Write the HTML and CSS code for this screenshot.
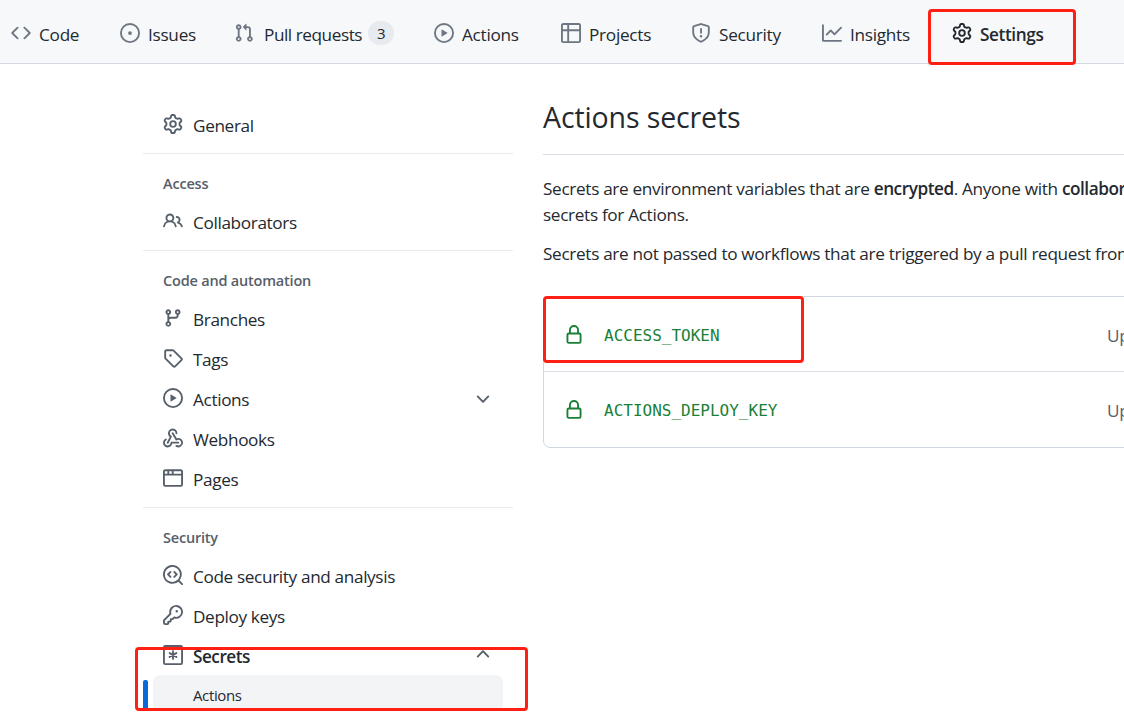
FILE: index.html
```html
<!DOCTYPE html>
<html lang="en">
<head>
<meta charset="utf-8">
<title>Actions secrets</title>
<link rel="stylesheet" href="styles.css">
</head>
<body>
<svg class="sprite" aria-hidden="true">
  <symbol id="code" viewBox="0 0 16 16"><path d="M4.72 3.22a.75.75 0 011.06 1.06L2.06 8l3.72 3.72a.75.75 0 11-1.06 1.06L.47 8.53a.75.75 0 010-1.06l4.25-4.25zm6.56 0a.75.75 0 10-1.06 1.06L13.94 8l-3.72 3.72a.75.75 0 101.06 1.06l4.25-4.25a.75.75 0 000-1.06l-4.25-4.25z"/></symbol>
  <symbol id="issue" viewBox="0 0 16 16"><path d="M8 9.5a1.5 1.5 0 100-3 1.5 1.5 0 000 3z"/><path fill-rule="evenodd" d="M8 0a8 8 0 100 16A8 8 0 008 0zM1.5 8a6.5 6.5 0 1113 0 6.5 6.5 0 01-13 0z"/></symbol>
  <symbol id="pull" viewBox="0 0 16 16"><path fill-rule="evenodd" d="M7.177 3.073L9.573.677A.25.25 0 0110 .854v4.792a.25.25 0 01-.427.177L7.177 3.427a.25.25 0 010-.354zM3.75 2.5a.75.75 0 100 1.5.75.75 0 000-1.5zm-2.25.75a2.25 2.25 0 113 2.122v5.256a2.251 2.251 0 11-1.5 0V5.372A2.25 2.25 0 011.5 3.25zM11 2.5h-1V4h1a1 1 0 011 1v5.628a2.251 2.251 0 101.5 0V5A2.5 2.5 0 0011 2.5zm1 10.25a.75.75 0 111.5 0 .75.75 0 01-1.5 0zM3.75 12a.75.75 0 100 1.5.75.75 0 000-1.5z"/></symbol>
  <symbol id="play" viewBox="0 0 16 16"><path fill-rule="evenodd" d="M1.5 8a6.5 6.5 0 1113 0 6.5 6.5 0 01-13 0zM8 0a8 8 0 100 16A8 8 0 008 0zM6.379 5.227A.25.25 0 006 5.442v5.117a.25.25 0 00.379.214l4.264-2.559a.25.25 0 000-.428L6.379 5.227z"/></symbol>
  <symbol id="table" viewBox="0 0 16 16"><path fill-rule="evenodd" d="M0 1.75C0 .784.784 0 1.75 0h12.5C15.216 0 16 .784 16 1.75v12.5A1.75 1.75 0 0114.25 16H1.75A1.75 1.75 0 010 14.25V1.75zM1.5 6.5v7.75c0 .138.112.25.25.25H5v-8H1.5zM5 5H1.5V1.75a.25.25 0 01.25-.25H5V5zm1.5 1.5v8h7.75a.25.25 0 00.25-.25V6.5h-8zm8-1.5h-8V1.5h7.75a.25.25 0 01.25.25V5z"/></symbol>
  <symbol id="shield" viewBox="0 0 16 16"><path fill-rule="evenodd" d="M7.467.133a1.75 1.75 0 011.066 0l5.25 1.68A1.75 1.75 0 0115 3.48V7c0 1.566-.32 3.182-1.303 4.682-.983 1.498-2.585 2.813-5.032 3.855a1.7 1.7 0 01-1.33 0c-2.447-1.042-4.049-2.357-5.032-3.855C1.32 10.182 1 8.566 1 7V3.48a1.75 1.75 0 011.217-1.667l5.25-1.68zm.61 1.429a.25.25 0 00-.153 0l-5.25 1.68a.25.25 0 00-.174.238V7c0 1.358.275 2.666 1.057 3.86.784 1.194 2.121 2.34 4.366 3.297a.2.2 0 00.154 0c2.245-.956 3.582-2.104 4.366-3.298C13.225 9.666 13.5 8.36 13.5 7V3.48a.25.25 0 00-.174-.237l-5.25-1.68zM9 10.5a1 1 0 11-2 0 1 1 0 012 0zm-.25-5.75a.75.75 0 10-1.5 0v3a.75.75 0 001.5 0v-3z"/></symbol>
  <symbol id="graph" viewBox="0 0 16 16"><path fill-rule="evenodd" d="M1.5 1.75a.75.75 0 00-1.5 0v12.5c0 .414.336.75.75.75h14.5a.75.75 0 000-1.5H1.5V1.75zm14.28 2.53a.75.75 0 00-1.06-1.06L10 7.94 7.53 5.47a.75.75 0 00-1.06 0L3.22 8.72a.75.75 0 001.06 1.06L7 7.06l2.47 2.47a.75.75 0 001.06 0l5.25-5.25z"/></symbol>
  <symbol id="gear" viewBox="0 0 16 16"><path fill-rule="evenodd" d="M8 0a8.2 8.2 0 0 1 .701.031C9.444.095 9.99.645 10.16 1.29l.288 1.107c.018.066.079.158.212.224.231.114.454.243.668.386.123.082.233.09.299.071l1.103-.303c.644-.176 1.392.021 1.82.63.27.385.506.792.704 1.218.315.675.111 1.422-.364 1.891l-.814.806c-.049.048-.098.147-.088.294.016.257.016.515 0 .772-.01.147.038.246.088.294l.814.806c.475.469.679 1.216.364 1.891a7.977 7.977 0 0 1-.704 1.217c-.428.61-1.176.807-1.82.63l-1.102-.302c-.067-.019-.177-.011-.3.071a5.909 5.909 0 0 1-.668.386c-.133.066-.194.158-.211.224l-.29 1.106c-.168.646-.715 1.196-1.458 1.26a8.006 8.006 0 0 1-1.402 0c-.743-.064-1.289-.614-1.458-1.26l-.289-1.106c-.018-.066-.079-.158-.212-.224a5.738 5.738 0 0 1-.668-.386c-.123-.082-.233-.09-.299-.071l-1.103.303c-.644.176-1.392-.021-1.82-.63a8.12 8.12 0 0 1-.704-1.218c-.315-.675-.111-1.422.363-1.891l.815-.806c.05-.048.098-.147.088-.294a6.214 6.214 0 0 1 0-.772c.01-.147-.038-.246-.088-.294l-.815-.806C.635 6.045.431 5.298.746 4.623a7.92 7.92 0 0 1 .704-1.217c.428-.61 1.176-.807 1.82-.63l1.102.302c.067.019.177.011.3-.071.214-.143.437-.272.668-.386.133-.066.194-.158.211-.224l.29-1.106C6.009.645 6.556.095 7.299.03 7.53.01 7.764 0 8 0Zm-.571 1.525c-.036.003-.108.036-.137.146l-.289 1.105c-.147.561-.549.967-.998 1.189-.173.086-.34.183-.5.29-.417.278-.97.423-1.529.27l-1.103-.303c-.109-.03-.175.016-.195.045-.22.312-.412.644-.573.99-.014.031-.021.11.059.19l.815.806c.411.406.562.957.53 1.456a4.709 4.709 0 0 0 0 .582c.032.499-.119 1.05-.53 1.456l-.815.806c-.081.08-.073.159-.059.19.162.346.353.677.573.989.02.03.085.076.195.046l1.102-.303c.56-.153 1.113-.008 1.53.27.161.107.328.204.501.29.447.222.85.629.997 1.189l.289 1.105c.029.109.101.143.137.146a6.6 6.6 0 0 0 1.142 0c.036-.003.108-.036.137-.146l.289-1.105c.147-.561.549-.967.998-1.189.173-.086.34-.183.5-.29.417-.278.97-.423 1.529-.27l1.103.303c.109.029.175-.016.195-.045.22-.313.411-.644.573-.99.014-.031.021-.11-.059-.19l-.815-.806c-.411-.406-.562-.957-.53-1.456a4.709 4.709 0 0 0 0-.582c-.032-.499.119-1.05.53-1.456l.815-.806c.081-.08.073-.159.059-.19a6.464 6.464 0 0 0-.573-.989c-.02-.03-.085-.076-.195-.046l-1.102.303c-.56.153-1.113.008-1.53-.27a4.44 4.44 0 0 0-.501-.29c-.447-.222-.85-.629-.997-1.189l-.289-1.105c-.029-.11-.101-.143-.137-.146a6.6 6.6 0 0 0-1.142 0ZM11 8a3 3 0 1 1-6 0 3 3 0 0 1 6 0ZM9.5 8a1.5 1.5 0 1 0-3.001.001A1.5 1.5 0 0 0 9.5 8Z"/></symbol>
  <symbol id="people" viewBox="0 0 16 16"><path fill-rule="evenodd" d="M5.5 3.5a2 2 0 100 4 2 2 0 000-4zM2 5.5a3.5 3.5 0 115.898 2.549 5.507 5.507 0 013.034 4.084.75.75 0 11-1.482.235 4.001 4.001 0 00-7.9 0 .75.75 0 01-1.482-.236A5.507 5.507 0 013.102 8.05 3.49 3.49 0 012 5.5zM11 4a.75.75 0 100 1.5 1.5 1.5 0 01.666 2.844.75.75 0 00-.416.672v.352a.75.75 0 00.574.73c1.2.289 2.162 1.2 2.522 2.372a.75.75 0 101.434-.44 5.01 5.01 0 00-2.56-3.012A3 3 0 0011 4z"/></symbol>
  <symbol id="branch" viewBox="0 0 16 16"><path fill-rule="evenodd" d="M11.75 2.5a.75.75 0 100 1.5.75.75 0 000-1.5zm-2.25.75a2.25 2.25 0 113 2.122V6A2.5 2.5 0 0110 8.5H6a1 1 0 00-1 1v1.128a2.251 2.251 0 11-1.5 0V5.372a2.25 2.25 0 111.5 0v1.836A2.492 2.492 0 016 7h4a1 1 0 001-1v-.628A2.25 2.25 0 019.5 3.25zM4.25 12a.75.75 0 100 1.5.75.75 0 000-1.5zM3.5 3.25a.75.75 0 111.5 0 .75.75 0 01-1.5 0z"/></symbol>
  <symbol id="tag" viewBox="0 0 16 16"><path fill-rule="evenodd" d="M1 7.775V2.75C1 1.784 1.784 1 2.75 1h5.025c.464 0 .91.184 1.238.513l6.25 6.25a1.75 1.75 0 0 1 0 2.474l-5.026 5.026a1.75 1.75 0 0 1-2.474 0l-6.25-6.25A1.752 1.752 0 0 1 1 7.775Zm1.5 0c0 .066.026.13.073.177l6.25 6.25a.25.25 0 0 0 .354 0l5.025-5.025a.25.25 0 0 0 0-.354l-6.25-6.25a.25.25 0 0 0-.177-.073H2.75a.25.25 0 0 0-.25.25ZM6 5a1 1 0 1 1 0 2 1 1 0 0 1 0-2Z"/></symbol>
  <symbol id="webhook" viewBox="0 0 16 16"><path d="M5.5 4.25a2.25 2.25 0 014.5 0 .75.75 0 001.5 0 3.75 3.75 0 10-6.14 2.889l-2.272 4.258a.75.75 0 001.324.706L7 7.25a.75.75 0 00-.309-1.015A2.25 2.25 0 015.5 4.25z"/><path d="M7.364 3.607a.75.75 0 011.03.257l2.608 4.349a3.75 3.75 0 11-.628 6.785.75.75 0 01.752-1.299 2.25 2.25 0 10-.033-3.88.75.75 0 01-1.03-.256L7.107 4.636a.75.75 0 01.257-1.03z"/><path d="M2.9 8.776A.75.75 0 012.625 9.8 2.25 2.25 0 106 11.75a.75.75 0 01.75-.751h5.5a.75.75 0 010 1.5H7.425a3.75 3.75 0 11-5.55-3.998.75.75 0 011.024.274z"/></symbol>
  <symbol id="browser" viewBox="0 0 16 16"><path fill-rule="evenodd" d="M0 2.75C0 1.784.784 1 1.75 1h12.5c.966 0 1.75.784 1.75 1.75v10.5A1.75 1.75 0 0114.25 15H1.75A1.75 1.75 0 010 13.25V2.75zm1.75-.25a.25.25 0 00-.25.25V4.5h2v-2H1.75zM5 2.5v2h2v-2H5zm3.5 0v2h6V2.75a.25.25 0 00-.25-.25H8.5zm6 3.5h-13v7.25c0 .138.112.25.25.25h12.5a.25.25 0 00.25-.25V6z"/></symbol>
  <symbol id="codescan" viewBox="0 0 16 16"><path d="M8.47 4.97a.75.75 0 000 1.06L9.94 7.5 8.47 8.97a.75.75 0 101.06 1.06l2-2a.75.75 0 000-1.06l-2-2a.75.75 0 00-1.06 0zM6.53 6.03a.75.75 0 00-1.06-1.06l-2 2a.75.75 0 000 1.06l2 2a.75.75 0 101.06-1.06L5.06 7.5l1.47-1.47z"/><path fill-rule="evenodd" d="M12.246 13.307a7.5 7.5 0 111.06-1.06l2.474 2.473a.75.75 0 11-1.06 1.06l-2.474-2.473zM1.5 7.5a6 6 0 1110.386 4.094.75.75 0 00-.292.293A6 6 0 011.5 7.5z"/></symbol>
  <symbol id="key" viewBox="0 0 16 16"><path fill-rule="evenodd" d="M10.5 0a5.499 5.499 0 1 1-1.288 10.848l-.932.932a.749.749 0 0 1-.53.22H7v.75a.749.749 0 0 1-.22.53l-.5.5a.749.749 0 0 1-.53.22H5v.75a.749.749 0 0 1-.22.53l-.5.5a.749.749 0 0 1-.53.22h-2A1.75 1.75 0 0 1 0 14.25v-2c0-.199.079-.389.22-.53l4.932-4.932A5.5 5.5 0 0 1 10.5 0Zm-4 5.5c-.001.431.069.86.205 1.269a.75.75 0 0 1-.181.768L1.5 12.56v1.69c0 .138.112.25.25.25h1.69l.06-.06v-1.19a.75.75 0 0 1 .75-.75h1.19l.06-.06v-1.19a.75.75 0 0 1 .75-.75h1.19l1.023-1.025a.75.75 0 0 1 .768-.18A4 4 0 1 0 6.5 5.5ZM11 6a1 1 0 1 1 0-2 1 1 0 0 1 0 2Z"/></symbol>
  <symbol id="asterisk" viewBox="0 0 16 16"><rect x=".75" y=".75" width="14.5" height="14.5" rx="1" fill="none" stroke="currentColor" stroke-width="1.5"/><path d="M8 4.9v6.2M5.3 6.45l5.4 3.1M5.3 9.55l5.4-3.1" fill="none" stroke="currentColor" stroke-width="1.5" stroke-linecap="round"/></symbol>
  <symbol id="chevron" viewBox="0 0 16 16"><path d="M12.78 6.22a.75.75 0 010 1.06l-4.25 4.25a.75.75 0 01-1.06 0L3.22 7.28a.75.75 0 011.06-1.06L8 9.94l3.72-3.72a.75.75 0 011.06 0z"/></symbol>
  <symbol id="lock" viewBox="0 0 16 16"><path fill-rule="evenodd" d="M4 4v2h-.25A1.75 1.75 0 002 7.75v5.5c0 .966.784 1.75 1.75 1.75h8.5A1.75 1.75 0 0014 13.25v-5.5A1.75 1.75 0 0012.25 6H12V4a4 4 0 10-8 0zm6.5 2V4a2.5 2.5 0 10-5 0v2h5zM12 7.5h.25a.25.25 0 01.25.25v5.5a.25.25 0 01-.25.25h-8.5a.25.25 0 01-.25-.25v-5.5a.25.25 0 01.25-.25H12z"/></symbol>
</svg>

<nav class="tabs">
  <a class="tab"><svg class="icon"><use href="#code"/></svg><span>Code</span></a>
  <a class="tab"><svg class="icon"><use href="#issue"/></svg><span>Issues</span></a>
  <a class="tab tab-pulls"><svg class="icon"><use href="#pull"/></svg><span>Pull requests</span><b class="count">3</b></a>
  <a class="tab"><svg class="icon"><use href="#play"/></svg><span>Actions</span></a>
  <a class="tab"><svg class="icon"><use href="#table"/></svg><span>Projects</span></a>
  <a class="tab"><svg class="icon"><use href="#shield"/></svg><span>Security</span></a>
  <a class="tab"><svg class="icon"><use href="#graph"/></svg><span>Insights</span></a>
  <a class="tab current"><svg class="icon"><use href="#gear"/></svg><span>Settings</span></a>
</nav>

<div class="layout">
  <aside class="sidebar">
    <section class="group">
      <a class="item"><svg class="icon"><use href="#gear"/></svg><span>General</span></a>
    </section>
    <section class="group">
      <h2 class="heading">Access</h2>
      <a class="item"><svg class="icon"><use href="#people"/></svg><span>Collaborators</span></a>
    </section>
    <section class="group">
      <h2 class="heading">Code and automation</h2>
      <a class="item"><svg class="icon"><use href="#branch"/></svg><span>Branches</span></a>
      <a class="item"><svg class="icon"><use href="#tag"/></svg><span>Tags</span></a>
      <a class="item"><svg class="icon"><use href="#play"/></svg><span>Actions</span><svg class="icon chevron"><use href="#chevron"/></svg></a>
      <a class="item"><svg class="icon"><use href="#webhook"/></svg><span>Webhooks</span></a>
      <a class="item"><svg class="icon"><use href="#browser"/></svg><span>Pages</span></a>
    </section>
    <section class="group">
      <h2 class="heading">Security</h2>
      <a class="item"><svg class="icon"><use href="#codescan"/></svg><span>Code security and analysis</span></a>
      <a class="item"><svg class="icon"><use href="#key"/></svg><span>Deploy keys</span></a>
      <a class="item open"><svg class="icon"><use href="#asterisk"/></svg><span>Secrets</span><svg class="icon chevron up"><use href="#chevron"/></svg></a>
      <div class="subrow"><i class="marker"></i><a class="subitem">Actions</a></div>
    </section>
  </aside>

  <main class="content">
    <h1 class="title">Actions secrets</h1>
    <p class="text">Secrets are environment variables that are <b>encrypted</b>. Anyone with <b>collaborator</b><br>secrets for Actions.</p>
    <p class="text">Secrets are not passed to workflows that are triggered by a pull request from</p>
    <div class="box">
      <div class="row"><svg class="icon"><use href="#lock"/></svg><code class="name">ACCESS_TOKEN</code><span class="updated">Updated</span></div>
      <div class="row"><svg class="icon"><use href="#lock"/></svg><code class="name">ACTIONS_DEPLOY_KEY</code><span class="updated">Updated</span></div>
    </div>
  </main>
</div>

<div class="mark mark-settings"></div>
<div class="mark mark-token"></div>
<div class="mark mark-secrets"></div>
</body>
</html>
```
FILE: styles.css
```css
* { box-sizing: border-box; }
body {
  margin: 0;
  width: 1124px;
  height: 712px;
  overflow: hidden;
  position: relative;
  background: #fff;
  color: #24292f;
  font: 400 17.2px/26px "Open Sans", "Noto Sans", sans-serif;
  letter-spacing: -0.36px;
}
.sprite { display: none; }
.icon { width: 20px; height: 20px; flex: none; fill: currentColor; color: #57606a; }

.tabs {
  display: grid;
  grid-template-columns: 109px 114px 200px 127px 130px 131px 130px 172px;
  height: 64px;
  padding: 3px 0 0 11px;
  background: #f6f8fa;
  border-bottom: 1px solid #d3d9e0;
  letter-spacing: -0.27px;
}
.tab { display: flex; align-items: center; gap: 8px; white-space: nowrap; }
.tab span { padding-top: 4px; }
.tab .icon { color: #6e7781; }
.tab-pulls { gap: 10px; letter-spacing: -0.45px; }
.count {
  width: 26px;
  height: 24px;
  margin-left: -4px;
  border-radius: 12px;
  background: #e7eaee;
  font-size: 15px;
  font-weight: 500;
  line-height: 25px;
  text-align: center;
}
.current { font-weight: 600; letter-spacing: -0.4px; }
.current .icon { color: #24292f; }

.layout { display: flex; gap: 30px; height: 647px; padding: 33px 0 0 143px; overflow: hidden; }
.sidebar { width: 370px; flex: none; }
.group { padding-bottom: 8px; border-bottom: 1px solid #e8eaed; }
.group:first-child { padding-top: 8px; }
.group:last-child { border: 0; }
.heading {
  height: 48px;
  margin: 0;
  padding: 17px 20px 0;
  color: #57606a;
  font-size: 14.5px;
  font-weight: 600;
  line-height: 26px;
  letter-spacing: -0.2px;
}
.item { display: flex; align-items: center; gap: 10px; height: 40px; padding: 0 20px; }
.item span { padding-top: 2px; }
.item .icon { margin-top: -2px; }
.item .chevron { margin-left: auto; }
.item .up { transform: rotate(180deg); }
.open { height: 39px; font-weight: 600; letter-spacing: -0.5px; }
.subrow { display: flex; gap: 5px; }
.marker { width: 5px; height: 30px; margin-top: 5px; border-radius: 2px; background: #0969da; }
.subitem {
  width: 350px;
  height: 40px;
  padding-left: 40px;
  border-radius: 7px;
  background: #f3f4f6;
  font-size: 15px;
  line-height: 40px;
}

.content { width: 740px; flex: none; }
.title {
  height: 58px;
  margin: 0 0 21px;
  border-bottom: 1px solid #d8dee4;
  font-size: 28.5px;
  font-weight: 400;
  line-height: 41px;
  letter-spacing: -0.12px;
}
.text { margin: 0 0 13px; letter-spacing: -0.33px; white-space: nowrap; }
.text b { font-weight: 600; letter-spacing: -0.45px; }
.box { margin-top: 29px; border: 1px solid #d0d7de; border-radius: 7px; }
.row { display: flex; align-items: center; height: 74px; padding: 1px 0 0 20px; }
.row + .row { height: 76px; padding-top: 0; border-top: 1px solid #d8dee4; }
.row .icon { color: #1a7f37; }
.name { width: 503px; margin-left: 20px; padding-top: 2px; color: #1a7f37; font: 16px/26px "DejaVu Sans Mono", monospace; letter-spacing: 0; }
.updated { padding-top: 2px; color: #57606a; }

/* Annotation frames lying over the page */
.mark { position: absolute; border: 3px solid #ff1f14; border-radius: 4px; }
.mark-settings { left: 928px; top: 9px; width: 148px; height: 56px; }
.mark-token { left: 543px; top: 296px; width: 261px; height: 67px; }
.mark-secrets { left: 135px; top: 647px; width: 393px; height: 64px; }
```
